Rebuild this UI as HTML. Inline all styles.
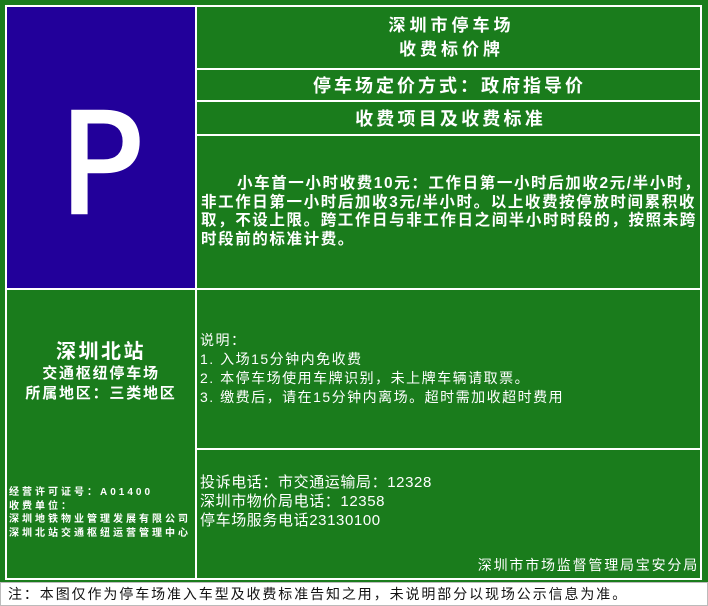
<!DOCTYPE html>
<html><head><meta charset="utf-8"><style>
*{margin:0;padding:0;box-sizing:border-box}
body{width:708px;height:606px;background:#1a7c1c;position:relative;overflow:hidden;font-family:"Liberation Sans","Noto Sans CJK SC",sans-serif;color:#fff}
.a{position:absolute;white-space:nowrap}
.l{position:absolute;background:#fff}
.c{position:absolute;text-align:center;font-weight:bold;white-space:nowrap}
</style></head><body>
<div class="a" style="left:5px;top:5px;width:697px;height:575px;border:2px solid #fff"></div>
<div class="a" style="left:7px;top:7px;width:188px;height:282px;background:#22009a"></div>
<div class="c" style="left:7px;top:96px;width:188px;font-size:140px;line-height:140px;font-weight:normal;-webkit-text-stroke:2.5px #fff;font-family:'DejaVu Sans',sans-serif">P</div>
<div class="l" style="left:195px;top:5px;width:2px;height:575px"></div>
<div class="l" style="left:195px;top:68px;width:507px;height:2px"></div>
<div class="l" style="left:195px;top:100px;width:507px;height:2px"></div>
<div class="l" style="left:195px;top:134px;width:507px;height:2px"></div>
<div class="l" style="left:5px;top:288px;width:697px;height:2px"></div>
<div class="l" style="left:195px;top:448px;width:507px;height:2px"></div>

<div class="c" style="left:199px;top:14px;width:505px;font-size:17px;line-height:24px;letter-spacing:4px">深圳市停车场<br>收费标价牌</div>
<div class="c" style="left:197px;top:75px;width:505px;font-size:18px;line-height:22px;letter-spacing:3px">停车场定价方式：政府指导价</div>
<div class="c" style="left:198px;top:108px;width:505px;font-size:18px;line-height:22px;letter-spacing:3.2px">收费项目及收费标准</div>
<div class="a" style="left:201px;top:175px;font-size:15.5px;line-height:18.5px;font-weight:bold;letter-spacing:1.6px"><span style="padding-left:36px"></span>小车首一小时收费10元：工作日第一小时后加收2元/半小时，<br>非工作日第一小时后加收3元/半小时。以上收费按停放时间累积收<br>取，不设上限。跨工作日与非工作日之间半小时时段的，按照未跨<br>时段前的标准计费。</div>

<div class="c" style="left:7px;top:340px;width:188px;font-size:20px;line-height:24px;letter-spacing:2.5px">深圳北站</div>
<div class="c" style="left:7px;top:364px;width:188px;font-size:15px;line-height:20px;letter-spacing:1.8px">交通枢纽停车场<br>所属地区：三类地区</div>
<div class="a" style="left:9px;top:486px;font-size:10px;line-height:13.7px;font-weight:bold;letter-spacing:3px">经营许可证号：A01400<br>收费单位：<br>深圳地铁物业管理发展有限公司<br>深圳北站交通枢纽运营管理中心</div>

<div class="a" style="left:200px;top:331px;font-size:14px;line-height:19px;letter-spacing:1.5px">说明：<br>1. 入场15分钟内免收费<br>2. 本停车场使用车牌识别，未上牌车辆请取票。<br>3. 缴费后，请在15分钟内离场。超时需加收超时费用</div>
<div class="a" style="left:200px;top:473px;font-size:15px;line-height:19px;letter-spacing:0.6px">投诉电话：市交通运输局：12328<br>深圳市物价局电话：12358<br>停车场服务电话23130100</div>
<div class="a" style="right:9px;top:556px;font-size:14px;line-height:18px;letter-spacing:1.8px">深圳市市场监督管理局宝安分局</div>

<div class="a" style="left:0;top:582px;width:708px;height:24px;background:#fff;border:1px solid #bbb"></div>
<div class="a" style="left:8px;top:585px;font-size:14px;line-height:18px;color:#111;letter-spacing:1.9px">注：本图仅作为停车场准入车型及收费标准告知之用，未说明部分以现场公示信息为准。</div>
</body></html>
